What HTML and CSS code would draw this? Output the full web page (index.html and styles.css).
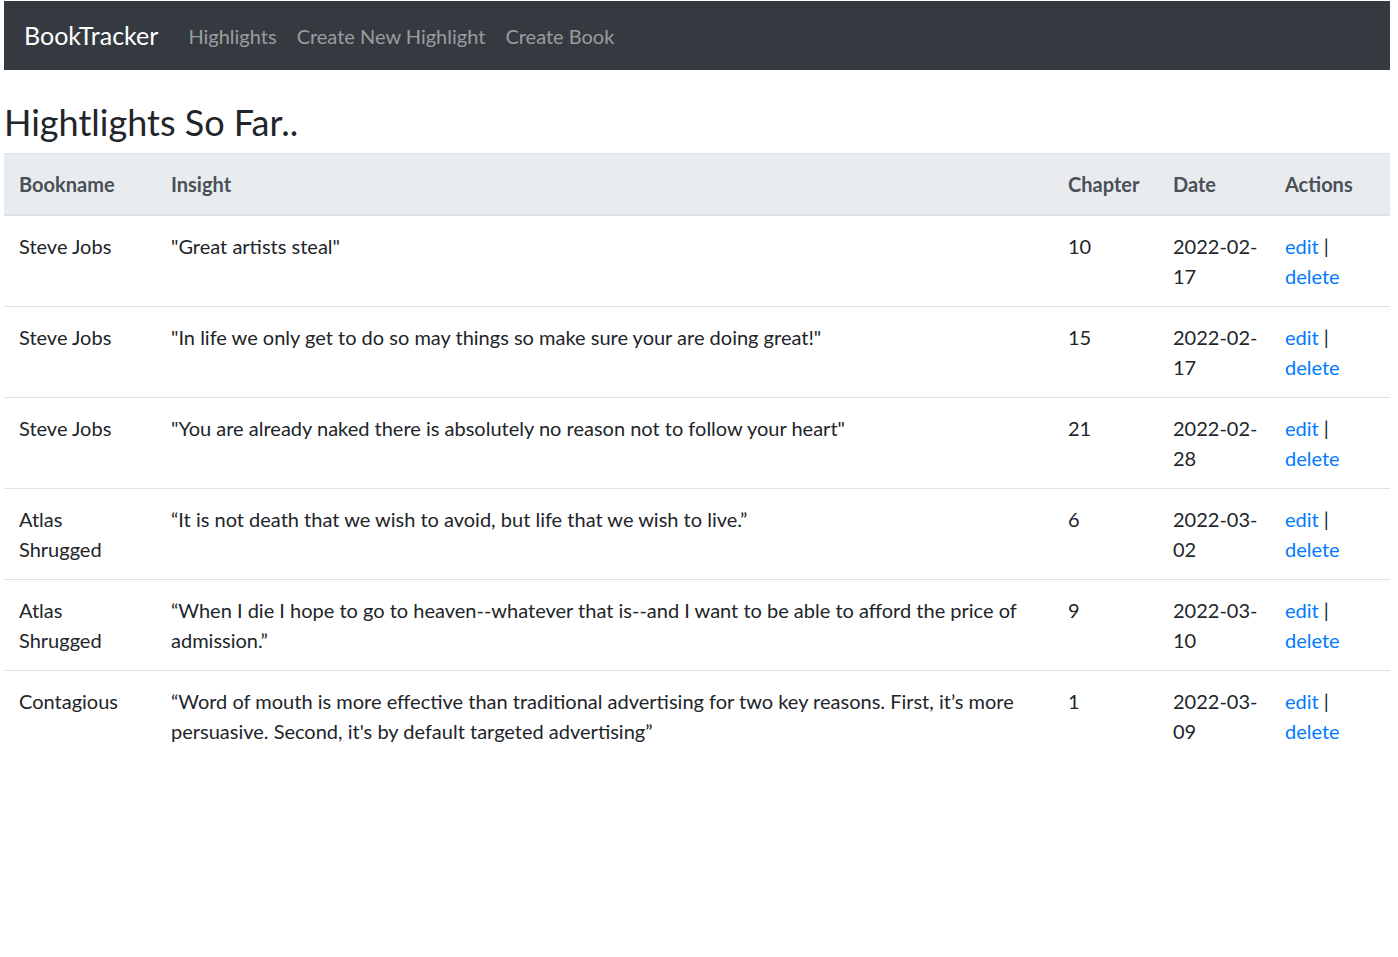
FILE: index.html
```html
<!DOCTYPE html>
<html>
<head>
<meta charset="utf-8">
<title>BookTracker</title>
<link rel="stylesheet" href="styles.css">
</head>
<body>
<div class="page">
  <nav class="navbar">
    <a class="brand" href="#">BookTracker</a>
    <ul class="nav">
      <li><a class="nav-link" href="#">Highlights</a></li>
      <li><a class="nav-link" href="#">Create New Highlight</a></li>
      <li><a class="nav-link" href="#">Create Book</a></li>
    </ul>
  </nav>
  <h2 class="title">Hightlights So Far..</h2>
  <table class="table">
    <colgroup>
      <col class="c-book"><col class="c-insight"><col class="c-chapter"><col class="c-date"><col class="c-actions">
    </colgroup>
    <thead>
      <tr><th>Bookname</th><th>Insight</th><th>Chapter</th><th>Date</th><th>Actions</th></tr>
    </thead>
    <tbody>
      <tr><td>Steve Jobs</td><td>"Great artists steal"</td><td>10</td><td class="date">2022-02-17</td><td><a href="#">edit</a> | <a href="#">delete</a></td></tr>
      <tr><td>Steve Jobs</td><td>"In life we only get to do so may things so make sure your are doing great!"</td><td>15</td><td class="date">2022-02-17</td><td><a href="#">edit</a> | <a href="#">delete</a></td></tr>
      <tr><td>Steve Jobs</td><td>"You are already naked there is absolutely no reason not to follow your heart"</td><td>21</td><td class="date">2022-02-28</td><td><a href="#">edit</a> | <a href="#">delete</a></td></tr>
      <tr><td>Atlas Shrugged</td><td>“It is not death that we wish to avoid, but life that we wish to live.”</td><td>6</td><td class="date">2022-03-02</td><td><a href="#">edit</a> | <a href="#">delete</a></td></tr>
      <tr><td>Atlas Shrugged</td><td>“When I die I hope to go to heaven--whatever that is--and I want to be able to afford the price of admission.”</td><td>9</td><td class="date">2022-03-10</td><td><a href="#">edit</a> | <a href="#">delete</a></td></tr>
      <tr><td>Contagious</td><td>“Word of mouth is more effective than traditional advertising for two key reasons. First, it’s more persuasive. Second, it's by default targeted advertising”</td><td>1</td><td class="date">2022-03-09</td><td><a href="#">edit</a> | <a href="#">delete</a></td></tr>
    </tbody>
  </table>
</div>
</body>
</html>
```

FILE: styles.css
```css
* { box-sizing: border-box; }
html, body { margin: 0; padding: 0; background: #fff; }
body {
  font-family: Lato, "Open Sans", sans-serif;
  font-size: 20px;
  line-height: 30px;
  color: #212529;
}
.page {
  padding: 1px 8px 0 4px;
}
a { color: #007bff; text-decoration: none; }

.navbar {
  display: flex;
  align-items: center;
  background: #343a40;
  height: 69px;
  padding: 10px 20px;
}
.brand {
  color: #fff;
  font-size: 25px;
  line-height: 37px;
  margin-right: 20px;
}
.nav {
  display: flex;
  list-style: none;
  margin: 0;
  padding: 0;
}
.nav-link {
  display: block;
  color: rgba(255,255,255,.5);
  padding: 10px 10px;
}

.title {
  font-size: 36px;
  line-height: 48px;
  font-weight: 400;
  margin: 28px 0 7px 0;
  color: #212529;
}

.table {
  width: 100%;
  border-collapse: collapse;
  table-layout: fixed;
}
.c-book { width: 152px; }
.c-chapter { width: 105px; }
.c-date { width: 112px; }
.c-actions { width: 120px; }
.table th, .table td {
  text-align: left;
  vertical-align: top;
  padding: 15px;
  border-top: 1px solid #dee2e6;
}
.table td.date {
  padding-right: 4px;
}
.table thead th {
  background: #e9ecef;
  color: #495057;
  font-weight: 700;
  border-bottom: 2px solid #dee2e6;
  vertical-align: bottom;
}
```
